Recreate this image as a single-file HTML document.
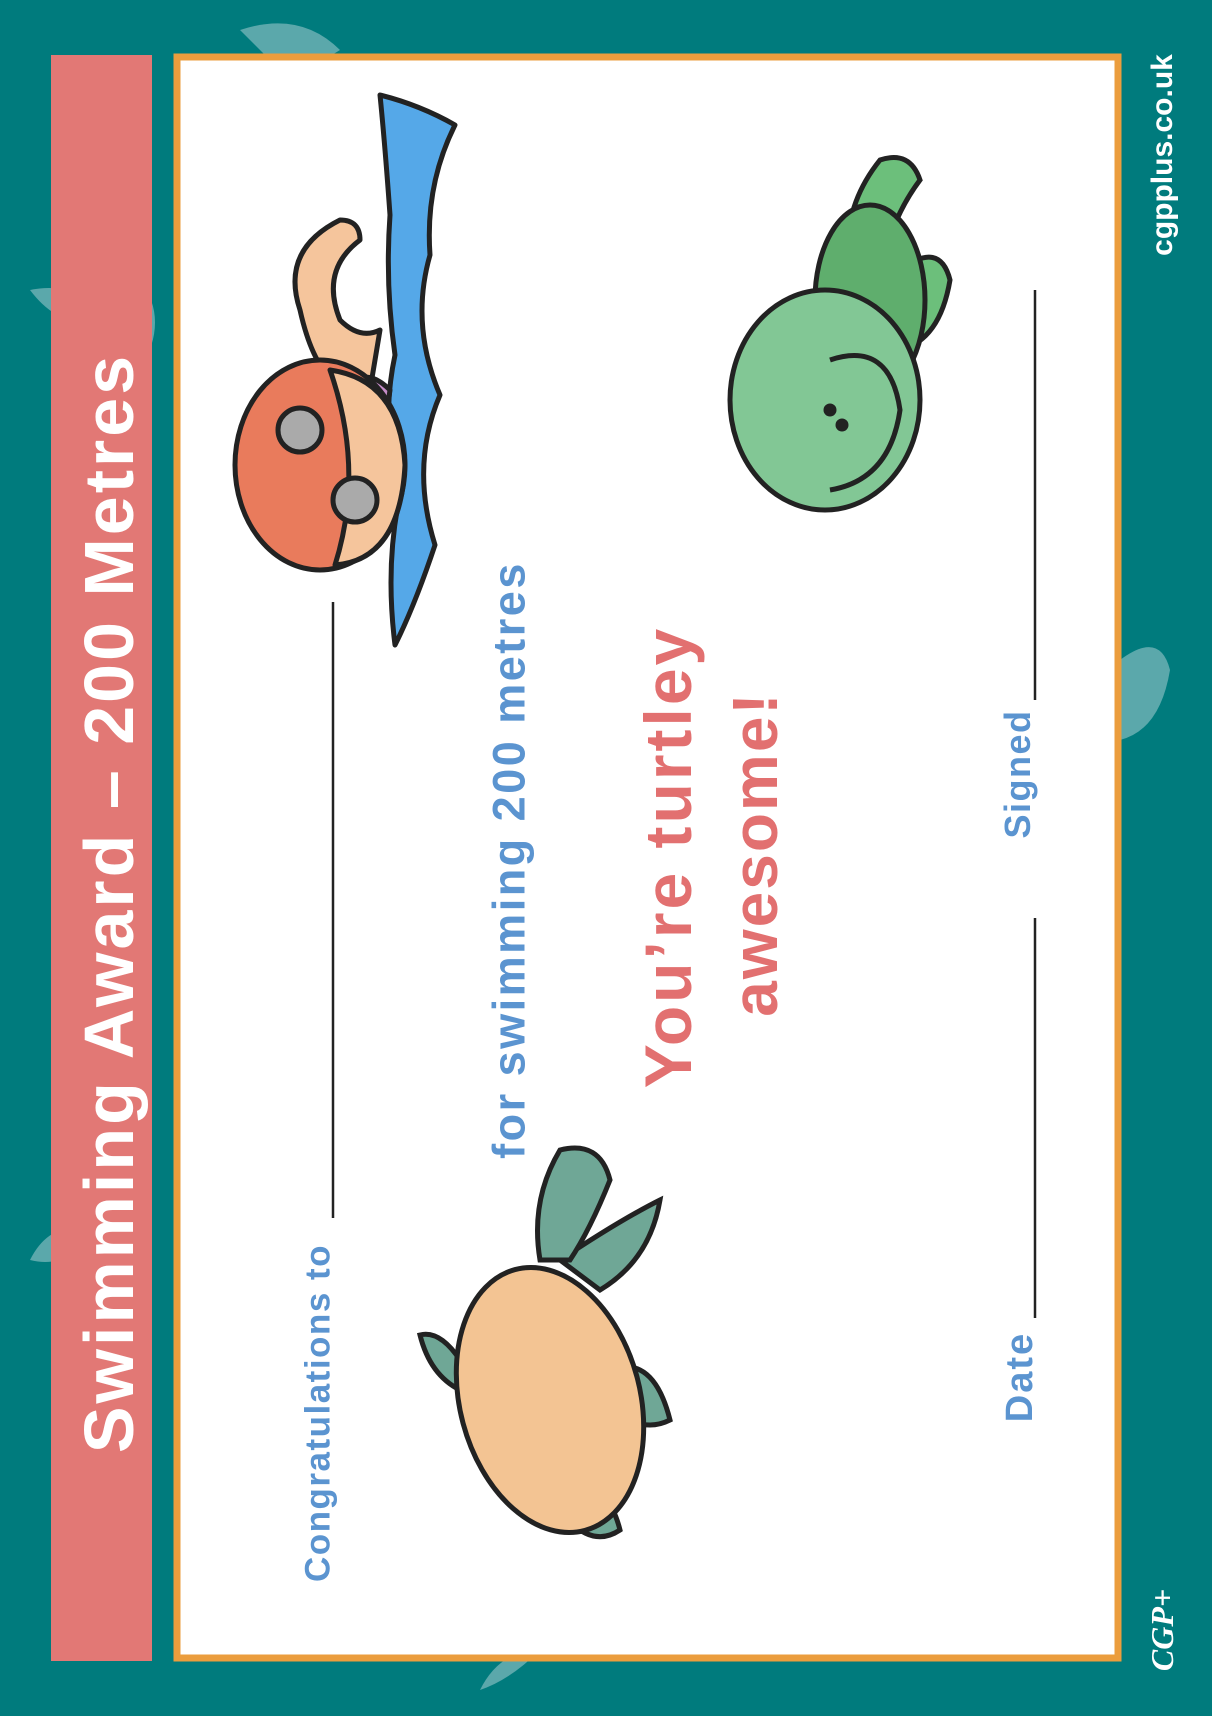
<!DOCTYPE html>
<html><head><meta charset="utf-8"><style>
html,body{margin:0;padding:0}
body{width:1212px;height:1716px;background:#007b7d;position:relative;overflow:hidden;font-family:"Liberation Sans",sans-serif}
.abs{position:absolute}
.rot{position:absolute;transform:translate(-50%,-50%) rotate(-90deg);white-space:nowrap;font-weight:bold;line-height:1}
.blue{color:#5b94d0}
.red{color:#e27070}
</style></head><body>
<svg class="abs" style="left:0;top:0" width="1212" height="1716">
<g fill="#5ba8ab">
<path d="M240 30 q60 -20 100 20 q-30 20 -70 10 z"/>
<path d="M30 290 q50 -10 70 30 q-40 10 -70 -30 z"/>
<path d="M140 280 q30 40 0 90 z"/>
<path d="M30 1260 q20 -40 60 -30 q-20 40 -60 30z"/>
<path d="M1120 660 q40 -30 50 10 q-10 60 -50 70z"/>
<path d="M480 1690 q20 -40 60 -40 q-30 30 -60 40z"/>
</g>
<rect x="51" y="55" width="101" height="1606" fill="#e27875"/>
<rect x="177" y="57" width="941" height="1601" fill="#fff" stroke="#eb9d3d" stroke-width="7"/>
<g stroke="#222" stroke-width="2.5">
<line x1="333" y1="1218" x2="333" y2="602"/>
<line x1="1035" y1="1318" x2="1035" y2="918"/>
<line x1="1035" y1="700" x2="1035" y2="290"/>
</g>
<g>
<g stroke="#222" stroke-width="5" stroke-linejoin="round">
<path d="M380 95 q40 10 75 30 q-30 60 -25 130 q-20 70 10 140 q-30 70 -5 150 q-20 60 -40 100 q-10 -80 5 -150 q-20 -70 -5 -140 q-10 -70 -5 -140 q-5 -70 -10 -120z" fill="#55a8e8"/>
<path d="M300 310 q-20 -60 40 -90 q20 0 20 20 q-40 30 -20 80 q20 20 40 10 l-10 60 q-50 10 -70 -80z" fill="#f5c59c"/>
<path d="M340 400 q20 -40 50 -10 l-10 70 q-30 -10 -40 -60z" fill="#c48cc8"/>
<ellipse cx="320" cy="465" rx="85" ry="105" fill="#e97b5c"/>
<path d="M330 370 q70 10 75 95 q-5 95 -70 100 q30 -95 -5 -195z" fill="#f5c59c"/>
<circle cx="300" cy="430" r="22" fill="#aaa"/>
<circle cx="355" cy="500" r="22" fill="#aaa"/>
</g>
<g stroke="#222" stroke-width="5">
<path d="M850 270 q-10 -60 30 -110 q30 -10 40 20 q-30 40 -40 95z" fill="#6cbf7b"/>
<path d="M900 270 q40 -30 50 10 q-10 60 -50 70z" fill="#6cbf7b"/>
<ellipse cx="870" cy="300" rx="55" ry="95" fill="#5fae6d"/>
<ellipse cx="825" cy="400" rx="95" ry="110" fill="#82c795"/>
<circle cx="830" cy="410" r="4" fill="#222"/><circle cx="842" cy="425" r="4" fill="#222"/>
<path d="M830 360 q60 -20 70 50 q-10 70 -70 80" fill="none"/>
</g>
<g stroke="#222" stroke-width="5" transform="translate(0,60)">
<path d="M590 1320 q60 -40 80 40 q-40 20 -80 -40z" fill="#6fa796"/>
<path d="M560 1200 q60 -40 100 -60 q-10 60 -60 90z" fill="#6fa796"/>
<path d="M540 1200 q-10 -60 20 -110 q40 -10 50 30 q-20 50 -40 80z" fill="#6fa796"/>
<path d="M460 1300 q-20 -30 -40 -25 q10 40 40 55z" fill="#6fa796"/>
<path d="M560 1450 q30 40 60 20 q-10 -40 -40 -50z" fill="#6fa796"/>
<ellipse cx="550" cy="1340" rx="90" ry="135" transform="rotate(-15 550 1340)" fill="#f3c493"/>
</g>
</g>
</svg>
<div class="rot" style="left:109px;top:903px;font-size:70px;letter-spacing:3px;color:#fff">Swimming Award – 200 Metres</div>
<div class="rot blue" style="left:318px;top:1413px;font-size:35px;letter-spacing:1.5px">Congratulations to</div>
<div class="rot blue" style="left:509px;top:860px;font-size:45px;letter-spacing:2.5px">for swimming 200 metres</div>
<div class="rot red" style="left:668px;top:857px;font-size:66px;letter-spacing:3px">You’re turtley</div>
<div class="rot red" style="left:755px;top:854px;font-size:64px;letter-spacing:2px">awesome!</div>
<div class="rot blue" style="left:1020px;top:1377px;font-size:38px;letter-spacing:2px">Date</div>
<div class="rot blue" style="left:1018px;top:774px;font-size:36px;letter-spacing:1.5px">Signed</div>
<div class="rot" style="left:1163px;top:155px;font-size:30px;color:#fff">cgpplus.co.uk</div>
<div class="rot" style="left:1162px;top:1630px;font-size:32px;color:#fff;font-style:italic;font-family:'Liberation Serif',serif">CGP+</div>
</body></html>
